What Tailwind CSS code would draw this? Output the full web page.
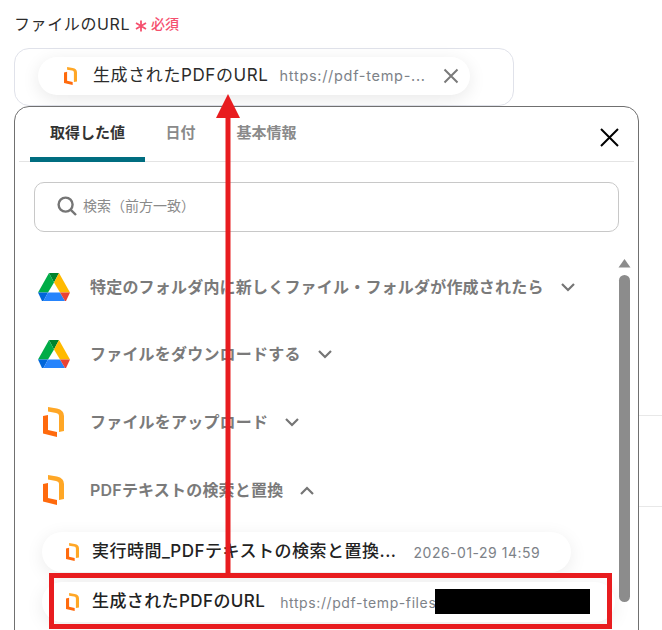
<!DOCTYPE html>
<html lang="ja">
<head>
    <meta charset="UTF-8" />
    <title>ファイルのURL</title>
    <script src="https://cdn.jsdelivr.net/npm/@tailwindcss/browser@4"></script>
</head>
<body class="bg-white">
    <div class="relative w-[662px] h-[630px] overflow-hidden font-['Inter','Noto_Sans_CJK_JP',sans-serif] text-[#2b2b2b]">
        <!-- background dividers behind the panel -->
        <div class="absolute left-[638px] right-0 top-[415px] h-px bg-[#e8e8e8]"></div>
        <div class="absolute left-[638px] right-0 top-[506px] h-px bg-[#e8e8e8]"></div>

        <!-- Field -->
        <div class="pl-[14px] pt-[13px]">
            <div class="flex items-center h-[22px] text-[16px] leading-[22px] tracking-[0.6px]">
                <span>ファイルのURL</span>
                <svg class="ml-[5px] w-[12px] h-[12px] mt-[3px]" viewBox="0 0 12 12" fill="none" stroke="#f5506e" stroke-width="1.8"><path d="M6 0.5 L6 11.5 M1 3 L11 9 M11 3 L1 9"/></svg>
                <span class="ml-[4px] text-[14px] font-medium text-[#f5506e] tracking-normal">必須</span>
            </div>
            <div class="mt-[13px] w-[500px] h-[58px] border border-[#e0e2ea] rounded-[15px] pl-[23px] pt-[8px]">
                <div class="flex items-center w-[432px] h-[38px] rounded-full bg-white shadow-[0_4px_18px_rgba(0,0,0,0.09)] pl-[26px]">
                    <svg class="w-[13px] h-[18px] shrink-0" viewBox="0 0 21 30" preserveAspectRatio="none"><path d="M5 0 L14 1.5 Q21 3 21 9 L21 24 L16 25 L16 9 Q16 6.5 13 6 L5 4.5 Z" fill="#ffa726"/><path d="M0 9 L5 8 L5 23 L14 25 L14 30 L0 26.5 Z" fill="#ff6a0d"/></svg>
                    <span class="ml-[16px] text-[17px] tracking-[0.6px] whitespace-nowrap">生成されたPDFのURL</span>
                    <span class="ml-[11px] text-[14.5px] tracking-[0.7px] text-[#7d8288] whitespace-nowrap">https://pdf-temp-...</span>
                    <svg class="ml-[17px] w-[16px] h-[16px]" viewBox="0 0 16 16" fill="none" stroke="#7a7a7a" stroke-width="2"><path d="M1.5 1.5 L14.5 14.5 M14.5 1.5 L1.5 14.5"/></svg>
                </div>
            </div>
        </div>

        <!-- Panel -->
        <div class="absolute left-[14px] top-[106px] w-[625px] h-[560px] bg-white border border-[#707070] rounded-[15px]">
            <div class="relative flex h-[55px] mx-[4px] border-b border-[#e4e4e4] text-[15px] font-bold">
                <div class="w-[115px] ml-[11px] h-[55px] border-b-[5px] border-[#006d80] rounded-t-[4px] flex items-center justify-center pt-[2px] text-[#333]">取得した値</div>
                <div class="w-[71px] h-[55px] flex items-center justify-center pb-[3px] text-[#8a8a8a]">日付</div>
                <div class="w-[101px] h-[55px] flex items-center justify-center pb-[3px] text-[#8a8a8a]">基本情報</div>
                <svg class="absolute right-[15px] top-[21px] w-[19px] h-[19px]" viewBox="0 0 19 19" fill="none" stroke="#000" stroke-width="2"><path d="M1 1 L18 18 M18 1 L1 18"/></svg>
            </div>

            <div class="mt-[20px] ml-[19px] w-[585px] h-[50px] border border-[#c8c8c8] rounded-[10px] flex items-center pl-[22px] pb-[3px]">
                <svg class="w-[20px] h-[20px]" viewBox="0 0 20 20" fill="none" stroke="#757575" stroke-width="2.4"><circle cx="8.6" cy="8.6" r="7"/><path d="M13.8 13.8 L19 19"/></svg>
                <span class="ml-[6px] text-[14px] text-[#8a8a8a]">検索（前方一致）</span>
            </div>

            <!-- Scrollbar -->
            <svg class="absolute left-[603px] top-[151px] w-[13px] h-[10px]" viewBox="0 0 13 10"><path d="M6.5 1 L12.5 9.5 L0.5 9.5 Z" fill="#8c8c8c"/></svg>
            <div class="absolute left-[604px] top-[168px] w-[11px] h-[327px] rounded-full bg-[#8c8c8c]"></div>

            <!-- Steps -->
            <div class="mt-[35px] ml-[22px] text-[16px] font-semibold tracking-[0.2px] text-[#7a7a7a]">
                <div class="flex items-center h-[40px]">
                    <svg class="ml-px w-[32px] h-[29px] shrink-0" viewBox="0 0 32 29"><path d="M11 0 L21 0 L16 9.5 Z" fill="#00832d"/><path d="M11 0 L16 9.5 L10 19.5 L0 19.5 Z" fill="#00ac47"/><path d="M21 0 L32 19.5 L22 19.5 L16 9.5 Z" fill="#ffba00"/><path d="M0 19.5 L10 19.5 L5.5 28 L4 28 Z" fill="#0066da"/><path d="M10 19.5 L22 19.5 L27 28 L5.5 28 Z" fill="#2684fc"/><path d="M22 19.5 L32 19.5 L28 28 L27 28 Z" fill="#ea4335"/></svg>
                    <span class="ml-[20px] whitespace-nowrap">特定のフォルダ内に新しくファイル・フォルダが作成されたら</span>
                    <svg class="ml-[17px] w-[14px] h-[9px]" viewBox="0 0 14 9" fill="none" stroke="#757575" stroke-width="2.2"><path d="M1 1 L7 7 L13 1"/></svg>
                </div>
                <div class="flex items-center h-[40px] mt-[27px]">
                    <svg class="ml-px w-[32px] h-[29px] shrink-0" viewBox="0 0 32 29"><path d="M11 0 L21 0 L16 9.5 Z" fill="#00832d"/><path d="M11 0 L16 9.5 L10 19.5 L0 19.5 Z" fill="#00ac47"/><path d="M21 0 L32 19.5 L22 19.5 L16 9.5 Z" fill="#ffba00"/><path d="M0 19.5 L10 19.5 L5.5 28 L4 28 Z" fill="#0066da"/><path d="M10 19.5 L22 19.5 L27 28 L5.5 28 Z" fill="#2684fc"/><path d="M22 19.5 L32 19.5 L28 28 L27 28 Z" fill="#ea4335"/></svg>
                    <span class="ml-[20px] whitespace-nowrap">ファイルをダウンロードする</span>
                    <svg class="ml-[17px] w-[14px] h-[9px]" viewBox="0 0 14 9" fill="none" stroke="#757575" stroke-width="2.2"><path d="M1 1 L7 7 L13 1"/></svg>
                </div>
                <div class="flex items-center h-[40px] mt-[28px]">
                    <svg class="ml-[6px] mr-[6px] w-[21px] h-[30px] shrink-0" viewBox="0 0 21 30"><path d="M5 0 L14 1.5 Q21 3 21 9 L21 24 L16 25 L16 9 Q16 6.5 13 6 L5 4.5 Z" fill="#ffa726"/><path d="M0 9 L5 8 L5 23 L14 25 L14 30 L0 26.5 Z" fill="#ff6a0d"/></svg>
                    <span class="ml-[20px] whitespace-nowrap">ファイルをアップロード</span>
                    <svg class="ml-[17px] w-[14px] h-[9px]" viewBox="0 0 14 9" fill="none" stroke="#757575" stroke-width="2.2"><path d="M1 1 L7 7 L13 1"/></svg>
                </div>
                <div class="flex items-center h-[40px] mt-[28px]">
                    <svg class="ml-[6px] mr-[6px] w-[21px] h-[30px] shrink-0" viewBox="0 0 21 30"><path d="M5 0 L14 1.5 Q21 3 21 9 L21 24 L16 25 L16 9 Q16 6.5 13 6 L5 4.5 Z" fill="#ffa726"/><path d="M0 9 L5 8 L5 23 L14 25 L14 30 L0 26.5 Z" fill="#ff6a0d"/></svg>
                    <span class="ml-[20px] whitespace-nowrap">PDFテキストの検索と置換</span>
                    <svg class="ml-[17px] w-[14px] h-[9px]" viewBox="0 0 14 9" fill="none" stroke="#757575" stroke-width="2.2"><path d="M1 8 L7 2 L13 8"/></svg>
                </div>
            </div>

            <!-- Values -->
            <div class="mt-[22px] ml-[27px] space-y-[10px]">
                <div class="flex items-center w-[529px] h-[40px] rounded-full bg-white shadow-[0_4px_18px_rgba(0,0,0,0.08)] pl-[24px]">
                    <svg class="w-[13px] h-[18px] shrink-0" viewBox="0 0 21 30" preserveAspectRatio="none"><path d="M5 0 L14 1.5 Q21 3 21 9 L21 24 L16 25 L16 9 Q16 6.5 13 6 L5 4.5 Z" fill="#ffa726"/><path d="M0 9 L5 8 L5 23 L14 25 L14 30 L0 26.5 Z" fill="#ff6a0d"/></svg>
                    <span class="ml-[13px] text-[17px] tracking-[0.5px] font-medium text-[#222] whitespace-nowrap">実行時間_PDFテキストの検索と置換...</span>
                    <span class="ml-[17px] text-[14px] tracking-[0.5px] text-[#7d8288] whitespace-nowrap">2026-01-29 14:59</span>
                </div>
                <div class="flex items-center w-[573px] h-[40px] rounded-full bg-white shadow-[0_4px_18px_rgba(0,0,0,0.08)] pl-[24px]">
                    <svg class="w-[13px] h-[18px] shrink-0" viewBox="0 0 21 30" preserveAspectRatio="none"><path d="M5 0 L14 1.5 Q21 3 21 9 L21 24 L16 25 L16 9 Q16 6.5 13 6 L5 4.5 Z" fill="#ffa726"/><path d="M0 9 L5 8 L5 23 L14 25 L14 30 L0 26.5 Z" fill="#ff6a0d"/></svg>
                    <span class="ml-[13px] text-[17px] tracking-[0.4px] font-medium text-[#222] whitespace-nowrap">生成されたPDFのURL</span>
                    <span class="ml-[15px] text-[14px] tracking-[0.6px] text-[#7d8288] whitespace-nowrap">https://pdf-temp-files</span>
                </div>
            </div>
        </div>

        <!-- Annotations over the screenshot -->
        <div class="absolute left-[435px] top-[589px] w-[155px] h-[25px] bg-black"></div>
        <div class="absolute left-[49px] top-[573px] w-[563px] h-[56px] border-[5px] border-[#e81c1f]"></div>
        <svg class="absolute left-[214px] top-[92px] w-[28px] h-[484px]" viewBox="0 0 28 484"><path d="M11.5 483 L11.5 26 L2 26 L14 2 L26 26 L16.5 26 L16.5 483 Z" fill="#e81c1f"/></svg>
    </div>
</body>
</html>
